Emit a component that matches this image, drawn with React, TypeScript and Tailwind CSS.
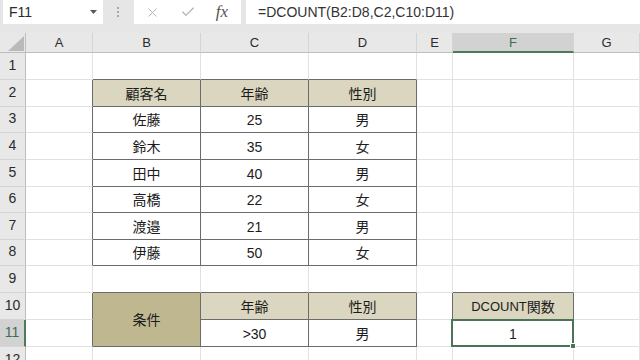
import { X, Check } from "lucide-react";

const FONT = '"Liberation Sans", "Noto Sans CJK JP", sans-serif';

// Row heights (incl. bottom gridline) for rows 1..12
const rowHeights = "grid-rows-[20px_27px_27px_26px_27px_27px_26px_27px_26px_27px_27px_27px_27px]";

const light = "border-r border-b border-[#e1e1e1]";
const leftOfTable = "border-r border-b border-r-[#6b6b6b] border-b-[#e1e1e1]";
const aboveTable = "border-r border-b border-r-[#e1e1e1] border-b-[#6b6b6b]";
const boxed = "border-r border-b border-[#6b6b6b]";
const head = "bg-[#dad6bf]";

const customers = [
  { name: "佐藤", age: "25", sex: "男" },
  { name: "鈴木", age: "35", sex: "女" },
  { name: "田中", age: "40", sex: "男" },
  { name: "高橋", age: "22", sex: "女" },
  { name: "渡邉", age: "21", sex: "男" },
  { name: "伊藤", age: "50", sex: "女" },
];

function Cell({ className = "", children }: { className?: string; children?: React.ReactNode }) {
  return (
    <div className={`flex items-center justify-center pt-[2px] text-[14px] text-[#1c1c1c] ${className}`}>
      {children}
    </div>
  );
}

function RowHead({ n, selected = false }: { n: number; selected?: boolean }) {
  return (
    <div
      className={
        selected
          ? "flex items-end justify-center border-b border-r-2 border-b-[#d4d4d4] border-r-[#4a7b5c] bg-[#d2d2d2] pb-[3px] text-[14px] text-[#3c6e4f]"
          : "flex items-end justify-center border-b border-r border-b-[#d4d4d4] border-r-[#bdbdbd] bg-[#e8e8e8] pb-[3px] text-[14px] text-[#2b2b2b]"
      }
    >
      {n}
    </div>
  );
}

function ColHead({ label, selected = false }: { label: string; selected?: boolean }) {
  return (
    <div
      className={
        selected
          ? "flex items-center justify-center border-r border-b-2 border-r-[#d4d4d4] border-b-[#4a7b5c] bg-[#d2d2d2] pt-[1px] text-[13px] text-[#3c6e4f]"
          : "flex items-center justify-center border-r border-b border-r-[#d4d4d4] border-b-[#bdbdbd] bg-[#e8e8e8] pt-[1px] text-[13px] text-[#2b2b2b]"
      }
    >
      {label}
    </div>
  );
}

export default function App() {
  return (
    <div className="h-[360px] w-[640px] overflow-hidden bg-white" style={{ fontFamily: FONT }}>
      {/* Formula bar */}
      <div className="flex h-[33px] bg-[#e6e6e6]">
        <div className="ml-[3px] flex h-[24px] w-[100px] items-center justify-between bg-white pl-[6px] pr-[6px]">
          <span className="text-[14px] text-[#2b2b2b]">F11</span>
          <svg width="7" height="4" viewBox="0 0 7 4">
            <polygon points="0,0 7,0 3.5,4" fill="#5a5a5a" />
          </svg>
        </div>
        <div className="flex h-[24px] w-[31px] flex-col items-center justify-center gap-[2px] pr-[1px]">
          <span className="h-[2px] w-[2px] bg-[#a8a8a8]" />
          <span className="h-[2px] w-[2px] bg-[#a8a8a8]" />
          <span className="h-[2px] w-[2px] bg-[#a8a8a8]" />
        </div>
        <div className="flex h-[24px] w-[107px] items-center bg-white">
          <div className="flex w-[36px] justify-center">
            <X className="h-[15px] w-[15px] text-[#b0b0b0]" strokeWidth={1.5} />
          </div>
          <div className="flex w-[36px] justify-center">
            <Check className="h-[16px] w-[16px] text-[#b0b0b0]" strokeWidth={1.75} />
          </div>
          <div className="flex w-[32px] justify-center">
            <span
              className="text-[17px] italic text-[#555]"
              style={{ fontFamily: '"Liberation Serif", serif' }}
            >
              fx
            </span>
          </div>
        </div>
        <div className="ml-[5px] flex h-[24px] flex-1 items-center bg-white pl-[12px] text-[14px] text-[#333]">
          =DCOUNT(B2:D8,C2,C10:D11)
        </div>
      </div>

      {/* Sheet */}
      <div className={`grid grid-cols-[26px_67px_108px_108px_108px_36px_121px_1fr] ${rowHeights}`}>
        {/* Column headers */}
        <div className="flex items-end justify-end border-r border-b border-[#bdbdbd] bg-[#e8e8e8] pr-[1px] pb-[1px]">
          <svg width="16" height="15" viewBox="0 0 16 15">
            <polygon points="16,0 16,15 0,15" fill="#b9b9b9" />
          </svg>
        </div>
        <ColHead label="A" />
        <ColHead label="B" />
        <ColHead label="C" />
        <ColHead label="D" />
        <ColHead label="E" />
        <ColHead label="F" selected />
        <ColHead label="G" />

        {/* Row 1 */}
        <RowHead n={1} />
        <Cell className={light} />
        <Cell className={aboveTable} />
        <Cell className={aboveTable} />
        <Cell className={aboveTable} />
        <Cell className={light} />
        <Cell className={light} />
        <Cell className={light} />

        {/* Row 2 */}
        <RowHead n={2} />
        <Cell className={leftOfTable} />
        <Cell className={`${boxed} ${head}`}>顧客名</Cell>
        <Cell className={`${boxed} ${head}`}>年齢</Cell>
        <Cell className={`${boxed} ${head}`}>性別</Cell>
        <Cell className={light} />
        <Cell className={light} />
        <Cell className={light} />

        {/* Rows 3-8 */}
        {customers.map((c, i) => [
          <RowHead key={`h${i}`} n={i + 3} />,
          <Cell key={`a${i}`} className={leftOfTable} />,
          <Cell key={`b${i}`} className={boxed}>{c.name}</Cell>,
          <Cell key={`c${i}`} className={`${boxed} text-[13px]`}>{c.age}</Cell>,
          <Cell key={`d${i}`} className={boxed}>{c.sex}</Cell>,
          <Cell key={`e${i}`} className={light} />,
          <Cell key={`f${i}`} className={light} />,
          <Cell key={`g${i}`} className={light} />,
        ])}

        {/* Row 9 */}
        <RowHead n={9} />
        <Cell className={light} />
        <Cell className={aboveTable} />
        <Cell className={aboveTable} />
        <Cell className={aboveTable} />
        <Cell className={light} />
        <Cell className={aboveTable} />
        <Cell className={light} />

        {/* Row 10 */}
        <RowHead n={10} />
        <Cell className={leftOfTable} />
        <Cell className={`${boxed} row-span-2 bg-[#bfb78f]`}>条件</Cell>
        <Cell className={`${boxed} ${head}`}>年齢</Cell>
        <Cell className={`${boxed} ${head}`}>性別</Cell>
        <Cell className={leftOfTable} />
        <Cell className={`${boxed} ${head}`}>
          <span className="text-[13px]">DCOUNT</span>関数
        </Cell>
        <Cell className={light} />

        {/* Row 11 */}
        <RowHead n={11} selected />
        <Cell className={leftOfTable} />
        <Cell className={`${boxed} text-[13px]`}>&gt;30</Cell>
        <Cell className={boxed}>男</Cell>
        <Cell className={light} />
        <Cell className={`${light} relative text-[13px]`}>
          1
          <div className="absolute -top-[1px] -left-[2px] -right-[1px] -bottom-[1px] border-2 border-[#4a7358]" />
          <div className="absolute -right-[3px] -bottom-[3px] h-[6px] w-[6px] border border-white bg-[#4a7358]" />
        </Cell>
        <Cell className={light} />

        {/* Row 12 */}
        <RowHead n={12} />
        <Cell className={light} />
        <Cell className={light} />
        <Cell className={light} />
        <Cell className={light} />
        <Cell className={light} />
        <Cell className={light} />
        <Cell className={light} />
      </div>
    </div>
  );
}
